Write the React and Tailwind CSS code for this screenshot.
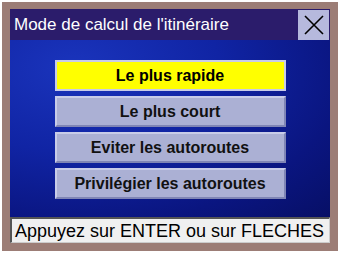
export default function App() {
  const options = [
    { label: "Le plus rapide", active: true },
    { label: "Le plus court" },
    { label: "Eviter les autoroutes" },
    { label: "Privilégier les autoroutes" },
  ];

  return (
    <div className="w-[340px] h-[254px] bg-white pt-[2px] pl-[2px] pr-[2px] pb-[3px] font-['Liberation_Sans',Arial,sans-serif]">
      <div className="w-full h-full bg-[#9c7d76] pt-[7px] pl-[8px] pr-[8px] pb-[8px] flex flex-col">
        <div className="h-[31px] bg-[#2b1c6b] flex items-center justify-between">
          <span className="pl-[4px] text-white text-[17px] leading-none">
            Mode de calcul de l'itinéraire
          </span>
          <div className="w-[31px] h-[30px] mr-[1px] bg-[#b6b9dd] flex items-center justify-center">
            <svg width="22" height="22" viewBox="0 0 22 22">
              <path d="M2 2 L20 20 M20 2 L2 20" stroke="#000" strokeWidth="1.6" />
            </svg>
          </div>
        </div>
        <div className="flex-1 bg-[radial-gradient(ellipse_at_20%_15%,#1a34bc_0%,#1024a4_40%,#0a1580_75%,#070f66_100%)] flex flex-col items-center pt-[20px] gap-[5px]">
          {options.map((o) => (
            <div
              key={o.label}
              className={
                o.active
                  ? "w-[231px] h-[31px] flex items-center justify-center bg-[#ffff00] border-[2px] border-[#c8cce8] text-black font-bold text-[16px]"
                  : "w-[231px] h-[31px] flex items-center justify-center bg-[#abb0d4] border-[2px] border-t-[#c8cce8] border-l-[#c8cce8] border-r-[#7f85b5] border-b-[#7f85b5] text-[#111] font-bold text-[16px]"
              }
            >
              {o.label}
            </div>
          ))}
        </div>
        <div className="h-[26px] bg-[#f0f0f0] border-t-[2px] border-l-[2px] border-t-[#555] border-l-[#555] border-r border-b border-r-[#ccc] border-b-[#ccc] flex items-center pl-[3px] text-black text-[18px] leading-none">
          Appuyez sur ENTER ou sur FLECHES
        </div>
      </div>
    </div>
  );
}
